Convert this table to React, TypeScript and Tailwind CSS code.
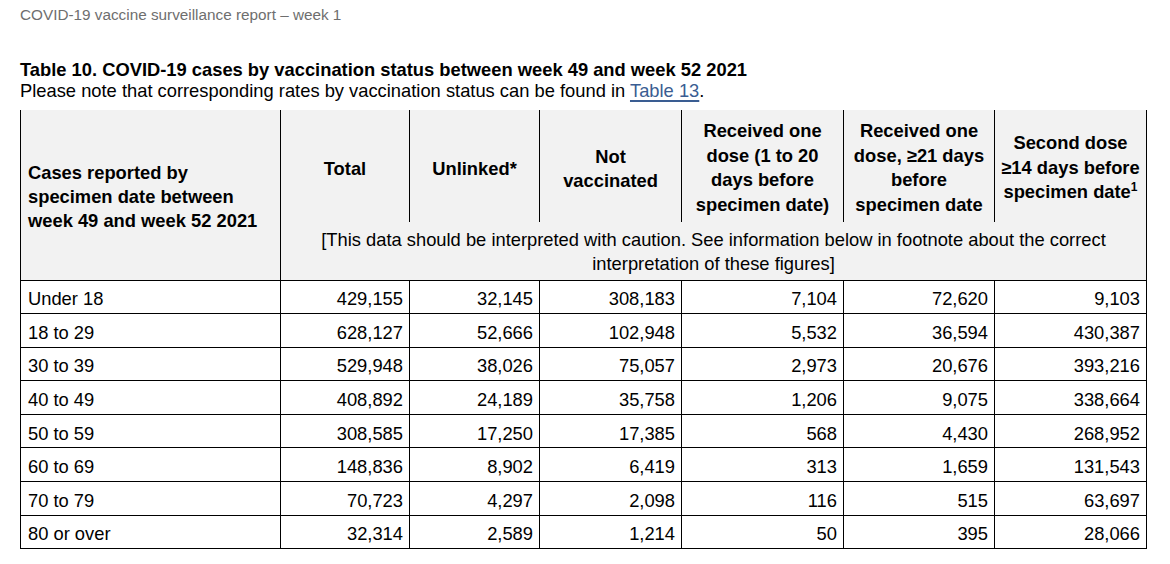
import React from "react";

const rows: [string, string, string, string, string, string, string][] = [
  ["Under 18", "429,155", "32,145", "308,183", "7,104", "72,620", "9,103"],
  ["18 to 29", "628,127", "52,666", "102,948", "5,532", "36,594", "430,387"],
  ["30 to 39", "529,948", "38,026", "75,057", "2,973", "20,676", "393,216"],
  ["40 to 49", "408,892", "24,189", "35,758", "1,206", "9,075", "338,664"],
  ["50 to 59", "308,585", "17,250", "17,385", "568", "4,430", "268,952"],
  ["60 to 69", "148,836", "8,902", "6,419", "313", "1,659", "131,543"],
  ["70 to 79", "70,723", "4,297", "2,098", "116", "515", "63,697"],
  ["80 or over", "32,314", "2,589", "1,214", "50", "395", "28,066"],
];

export default function App() {
  return (
    <div
      className="w-[1170px] h-[564px] bg-white text-black overflow-hidden px-[20px]"
      style={{ fontFamily: '"Liberation Sans", Arial, sans-serif' }}
    >
      <div className="pt-[5px] text-[15.3px] leading-[20px] text-[#6e6e6e]">
        COVID-19 vaccine surveillance report – week 1
      </div>
      <div className="mt-[34px] text-[18.33px] leading-[21px] font-bold">
        Table 10. COVID-19 cases by vaccination status between week 49 and week 52 2021
      </div>
      <div className="text-[18.33px] leading-[21px]">
        Please note that corresponding rates by vaccination status can be found in{" "}
        <span className="text-[#3a5d92] underline decoration-[1.5px] underline-offset-[3px]">Table 13</span>.
      </div>
      <table className="mt-[9px] w-[1126px] table-fixed border-collapse text-[18.33px]">
        <colgroup>
          <col className="w-[260px]" />
          <col className="w-[129px]" />
          <col className="w-[130px]" />
          <col className="w-[142px]" />
          <col className="w-[162px]" />
          <col className="w-[151px]" />
          <col className="w-[152px]" />
        </colgroup>
        <thead>
          <tr className="h-[112px] bg-[#f2f2f2]">
            <th
              rowSpan={2}
              className="border-l border-r border-black text-left align-middle pl-[7px] pr-[2px] pt-[4px] font-bold leading-[24px] whitespace-nowrap"
            >
              Cases reported by
              <br />
              specimen date between
              <br />
              week 49 and week 52 2021
            </th>
            <th className="border-r border-black text-center align-middle pt-[5px] font-bold leading-[24px]">
              Total
            </th>
            <th className="border-r border-black text-center align-middle pt-[5px] font-bold leading-[24px]">
              Unlinked*
            </th>
            <th className="border-r border-black text-center align-middle pt-[5px] font-bold leading-[24px]">
              Not
              <br />
              vaccinated
            </th>
            <th className="border-r border-black text-center align-middle pt-[4px] font-bold leading-[24.5px] whitespace-nowrap">
              Received one
              <br />
              dose (1 to 20
              <br />
              days before
              <br />
              specimen date)
            </th>
            <th className="border-r border-black text-center align-middle pt-[4px] font-bold leading-[24.5px] whitespace-nowrap">
              Received one
              <br />
              dose, ≥21 days
              <br />
              before
              <br />
              specimen date
            </th>
            <th className="border-r border-black text-center align-middle pt-[4px] font-bold leading-[24.5px] whitespace-nowrap">
              Second dose
              <br />
              ≥14 days before
              <br />
              specimen date<sup className="text-[12px] relative -top-[7px] align-baseline leading-none">1</sup>
            </th>
          </tr>
          <tr className="h-[58px] bg-[#f2f2f2]">
            <td
              colSpan={6}
              className="border-r border-black text-center align-middle pt-[3px] leading-[24px] px-[4px]"
            >
              [This data should be interpreted with caution. See information below in footnote about the correct
              <br />
              interpretation of these figures]
            </td>
          </tr>
        </thead>
        <tbody>
          {rows.map((r) => (
            <tr key={r[0]} className="h-[33.6px]">
              {r.map((c, i) => (
                <td
                  key={i}
                  className={
                    i === 0
                      ? "border border-black text-left pl-[7px] pt-[5px] pb-0 leading-[22px] align-middle"
                      : "border border-black text-right pr-[6px] pt-[5px] pb-0 leading-[22px] align-middle"
                  }
                >
                  {c}
                </td>
              ))}
            </tr>
          ))}
        </tbody>
      </table>
    </div>
  );
}
